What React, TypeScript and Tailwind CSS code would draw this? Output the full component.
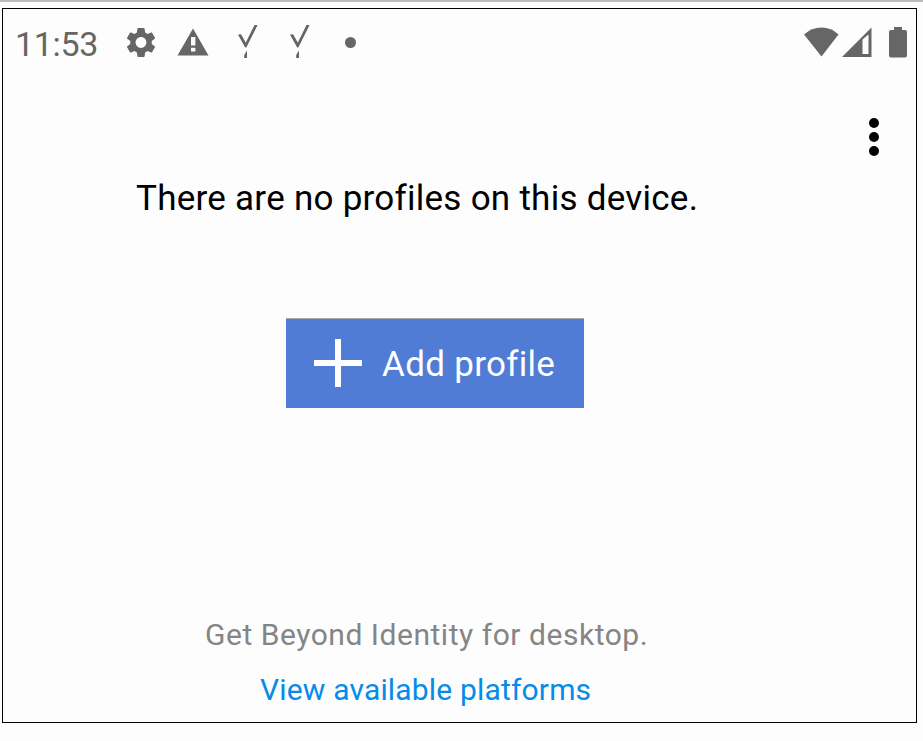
import type { ReactNode } from 'react';

function Icon({ box, className, children }: { box: string; className: string; children: ReactNode }) {
  return (
    <svg viewBox={box} className={`block shrink-0 fill-current ${className}`} aria-hidden="true">
      {children}
    </svg>
  );
}

function GearIcon() {
  return (
    <Icon box="0 0 24 24" className="ml-[23px] mt-[15px] h-[37px] w-[36px]">
      <path d="M19.14 12.94c.04-.3.06-.61.06-.94 0-.32-.02-.64-.07-.94l2.03-1.58c.18-.14.23-.41.12-.61l-1.92-3.32c-.12-.22-.37-.29-.59-.22l-2.39.96c-.5-.38-1.03-.7-1.62-.94l-.36-2.54c-.04-.24-.24-.41-.48-.41h-3.84c-.24 0-.43.17-.47.41l-.36 2.54c-.59.24-1.13.57-1.62.94l-2.39-.96c-.22-.08-.47 0-.59.22L2.74 8.87c-.12.21-.08.47.12.61l2.03 1.58c-.05.3-.09.63-.09.94s.02.64.07.94l-2.03 1.58c-.18.14-.23.41-.12.61l1.92 3.32c.12.22.37.29.59.22l2.39-.96c.5.38 1.03.7 1.62.94l.36 2.54c.05.24.24.41.48.41h3.84c.24 0 .44-.17.47-.41l.36-2.54c.59-.24 1.13-.56 1.62-.94l2.39.96c.22.08.47 0 .59-.22l1.92-3.32c.12-.22.07-.47-.12-.61l-2.01-1.58zM12 15.6c-1.98 0-3.6-1.62-3.6-3.6s1.62-3.6 3.6-3.6 3.6 1.62 3.6 3.6-1.62 3.6-3.6 3.6z" />
    </Icon>
  );
}

function WarningIcon() {
  return (
    <Icon box="0 0 32 28" className="ml-[18px] mt-[19px] h-[28px] w-[32px]">
      <path
        fillRule="evenodd"
        d="M16 .5 31.5 27.5H.5ZM14 9v8.6h4.400V9ZM14 19.800v3.800h4.400v-3.800Z"
      />
    </Icon>
  );
}

function CheckMark({ className }: { className: string }) {
  return (
    <Icon box="0 0 21 35" className={`mt-[16px] h-[35px] w-[21px] ${className}`}>
      <path d="M0 9.500H3.200L7.800 17.800 16.500 0H19.500L8.300 22.500H7.200Z" />
      <path d="M1.500 9.800 7.800 20.200 18 .4" fill="none" stroke="currentColor" strokeWidth="2" />
      <path d="M9 25.500V33H6.200V30Z" />
    </Icon>
  );
}

function StatusBar() {
  return (
    <div className="flex h-[71px] items-start text-[#666]">
      <span className="ml-[12px] mt-[15px] w-[85px] whitespace-nowrap text-[34px] leading-[40px] tracking-[-0.3px]">
        11:53
      </span>
      <GearIcon />
      <WarningIcon />
      <CheckMark className="ml-[29px]" />
      <CheckMark className="ml-[31px]" />
      <span className="ml-[34px] mt-[28px] h-[11px] w-[11px] rounded-full bg-[#666]" />
      <div className="ml-auto mr-[9px] mt-[18px] flex items-start">
        <Icon box="0 0 36 30" className="h-[30px] w-[36px]">
          <path d="M1 7.500Q8.500.5 18.500 .5T35.500 7.500L18.500 29.500Z" />
        </Icon>
        <Icon box="0 0 30 30" className="ml-[3px] h-[30px] w-[30px]">
          <path fillRule="evenodd" d="M0 30 29.500.5V30ZM20.500 12.500V27H26.500V7.500Z" />
        </Icon>
        <Icon box="0 0 18 31" className="ml-[17px] h-[31px] w-[18px]">
          <path d="M5 0h8v3h3q2 0 2 2v23.500q0 2-2 2H2q-2 0-2-2V5q0-2 2-2h3Z" />
        </Icon>
      </div>
    </div>
  );
}

export default function App() {
  return (
    <div className="h-[741px] w-[923px] overflow-hidden bg-[#fdfdfd] font-[Roboto,sans-serif]">
      <div className="h-[2px] bg-[#bbb]" />
      <main className="ml-[2px] mt-[6px] flex h-[715px] w-[915px] flex-col border border-black">
        <StatusBar />
        <button aria-label="More options" className="mr-[37.5px] mt-[38px] flex flex-col gap-[4px] self-end text-black">
          <span className="h-[10px] w-[10px] rounded-full bg-current" />
          <span className="h-[10px] w-[10px] rounded-full bg-current" />
          <span className="h-[10px] w-[10px] rounded-full bg-current" />
        </button>
        <h1 className="ml-[133px] mt-[22px] whitespace-nowrap text-[35px] leading-[42px] tracking-[0.26px] text-black">
          There are no profiles on this device.
        </h1>
        <button className="ml-[283px] mt-[98px] flex h-[90px] w-[298px] items-center border-t border-[#aaa] bg-[#507cd5] text-white">
          <Icon box="0 0 48 48" className="-mt-[2px] ml-[28px] h-[48px] w-[48px]">
            <path d="M21 0h6v21h21v6H27v21h-6V27H0v-6h21Z" />
          </Icon>
          <span className="ml-[20px] mt-[2px] whitespace-nowrap text-[35px] leading-[42px] tracking-[0.3px]">Add profile</span>
        </button>
        <p className="ml-[202px] mt-[209px] whitespace-nowrap text-[30px] leading-[36px] tracking-[0.53px] text-[#858585]">
          Get Beyond Identity for desktop.
        </p>
        <a className="ml-[257px] mt-[19px] self-start whitespace-nowrap text-[30px] leading-[36px] tracking-[0.17px] text-[#058bea]">
          View available platforms
        </a>
      </main>
    </div>
  );
}
